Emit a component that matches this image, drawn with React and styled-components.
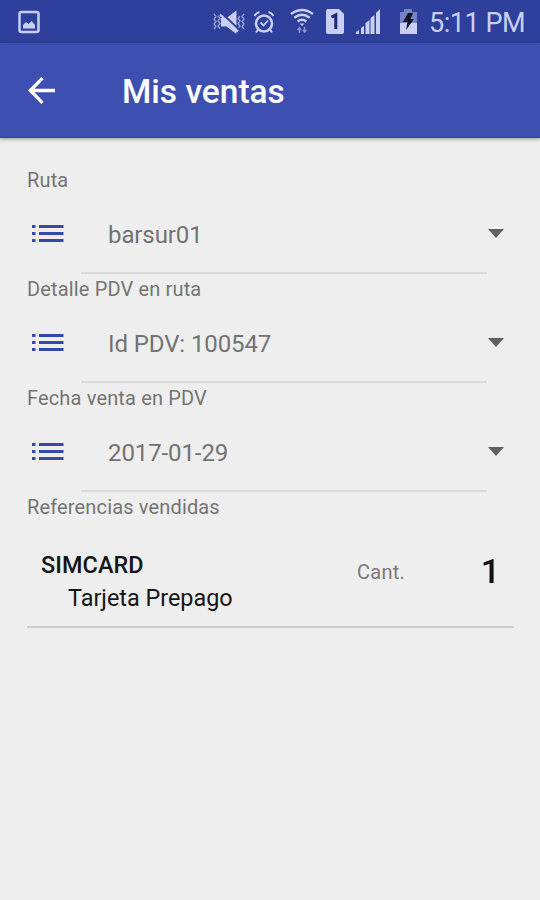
import React from 'react';
import styled, { createGlobalStyle } from 'styled-components';

const GlobalStyle = createGlobalStyle`
  body {
    margin: 0;
    background: #eeeeee;
    font-family: Roboto, "Liberation Sans", sans-serif;
  }
`;

const Screen = styled.div`
  display: flex;
  flex-direction: column;
  width: 540px;
  height: 900px;
  overflow: hidden;
  background: #eeeeee;
`;

const StatusBar = styled.div`
  display: flex;
  align-items: center;
  flex: none;
  height: 43px;
  padding: 0 15px 0 18px;
  box-sizing: border-box;
  background: #2e3f9c;
  color: #c8cff2;
`;

const StatusIcon = styled.svg`
  display: block;
  flex: none;
  width: ${props => props.$w}px;
  height: 30px;
  margin-left: ${props => props.$gap || 0}px;
`;

const Spacer = styled.div`
  flex: 1;
`;

const Clock = styled.div`
  margin-left: 12px;
  padding-top: 3px;
  width: 96px;
  font-size: 27px;
  line-height: 32px;
  letter-spacing: -0.45px;
  white-space: nowrap;
`;

const AppBar = styled.div`
  display: flex;
  align-items: center;
  flex: none;
  height: 95px;
  padding-left: 27px;
  box-sizing: border-box;
  background: #3d50b1;
  border-bottom: 1px solid #2f409c;
  box-shadow: 0 1px 4px rgba(0, 0, 0, .4);
`;

const Title = styled.h1`
  margin: 3px 0 0 67px;
  color: #fff;
  font-size: 33.5px;
  font-weight: 500;
  line-height: 40px;
`;

const Content = styled.div`
  padding: 27px 26px 0 27px;
`;

const Field = styled.div`
  display: flex;
  flex-direction: column;
  height: 109px;
`;

const Label = styled.div`
  height: 30px;
  line-height: 31px;
  font-size: 20px;
  color: #747474;
  letter-spacing: 0.15px;
`;

const Select = styled.div`
  display: flex;
  align-items: center;
  height: 77px;
  padding: 0 10px 0 5px;
`;

const Value = styled.div`
  flex: 1;
  margin-left: 44px;
  padding-top: 2px;
  font-size: 24px;
  letter-spacing: -0.1px;
  color: #727272;
`;

const Caret = styled.div`
  border: 8px solid transparent;
  border-top: 9px solid #606060;
  border-bottom: 0;
`;

const Divider = styled.div`
  height: 2px;
  margin: 0 27px 0 54px;
  background: #dadada;
`;

const Sale = styled.div`
  display: flex;
  align-items: center;
  height: 104px;
  padding: 0 17px 0 14px;
  border-bottom: 2px solid #cccccc;
`;

const Product = styled.div`
  flex: 1;
  padding-top: 16px;
  font-size: 23.4px;
  line-height: 33px;
  color: #151515;
`;

const Category = styled.div`
  font-weight: 500;
  letter-spacing: 0.1px;
`;

const Name = styled.div`
  padding-left: 27px;
`;

const Quantity = styled.div`
  width: 95px;
  margin-right: -3px;
  text-align: right;
  font-size: 34px;
  font-weight: 500;
  color: #111;
  padding-bottom: 6px;
`;

const QuantityLabel = styled.div`
  padding-bottom: 4px;
  font-size: 20px;
  letter-spacing: 0.25px;
  color: #7a7a7a;
`;

const ListIcon = () => (
  <svg width="32" height="18" viewBox="0 0 32 18" fill="#3449a9">
    {[0, 7, 14].map(y => (
      <React.Fragment key={y}>
        <rect x="0" y={y} width="3.5" height="3" />
        <rect x="7" y={y} width="24.5" height="3" />
      </React.Fragment>
    ))}
  </svg>
);

const BackIcon = () => (
  <svg width="28" height="28" viewBox="0 0 28 28" fill="none" stroke="#fff" strokeWidth="3.3">
    <path d="M28 14.5H3M15.5 2.2L3.3 14.5l12.2 12.3" />
  </svg>
);

const PictureIcon = () => (
  <StatusIcon $w={22} viewBox="0 0 22 30">
    <rect x="1.5" y="5" width="19" height="20" rx="2" fill="none" stroke="currentColor" strokeWidth="2.5" />
    <path d="M5 21.5V18l3-3 2.5 2 3-3 3.5 4v3.5z" fill="currentColor" />
  </StatusIcon>
);

const VibrateIcon = () => (
  <StatusIcon $w={34} viewBox="0 0 34 30">
    <path d="M2 7l2 2.5-2 2.5 2 2.5-2 2.5 2 2.5-2 2.5M6 9l2 2.5-2 2.5 2 2.5-2 2.5 2 2.5M32 7l-2 2.5 2 2.5-2 2.5 2 2.5-2 2.5 2 2.5M28 9l-2 2.5 2 2.5-2 2.5 2 2.5-2 2.5" fill="none" stroke="currentColor" strokeWidth="1.3" opacity=".7" />
    <path d="M9 11h5.5L24.5 3.5V27l-10-7.5H9z" fill="currentColor" />
    <path d="M9.5 6l18 17" stroke="#2e3f9c" strokeWidth="2" />
    <path d="M8 7.5l18 17" stroke="currentColor" strokeWidth="2.4" />
  </StatusIcon>
);

const AlarmIcon = () => (
  <StatusIcon $w={22} $gap={7} viewBox="0 0 22 30" fill="none" stroke="currentColor">
    <circle cx="11" cy="16.5" r="8" strokeWidth="2.6" />
    <path d="M1.5 9a8 8 0 0 1 5-4M20.5 9a8 8 0 0 0-5-4M5 22.5l-2 3M17 22.5l2 3" strokeWidth="2" />
    <path d="M7.5 15.5l3 3 4.5-5" strokeWidth="1.8" />
  </StatusIcon>
);

const WifiIcon = () => (
  <StatusIcon $w={24} $gap={15} viewBox="0 0 24 30" fill="none" stroke="currentColor">
    <path d="M1 7q11-8 22 0M4.3 10.8q7.7-6 15.4 0M7.6 14.5q4.4-3.5 8.8 0" strokeWidth="2.4" />
    <path d="M9.5 16.5h5L12 19z" fill="currentColor" stroke="none" />
    <path d="M9.5 26v-5M7.5 23l2-2 1.5 2M14.5 20v5M13 23l1.5 2 2-2" strokeWidth="1.5" opacity=".6" />
  </StatusIcon>
);

const SimIcon = () => (
  <StatusIcon $w={18} $gap={12} viewBox="0 0 18 30">
    <path d="M2 2h11l5 5v18q0 2-2 2H2q-2 0-2-2V4q0-2 2-2z" fill="currentColor" />
    <path d="M5.5 10.2L9.8 8v14" fill="none" stroke="#17277c" strokeWidth="3" />
  </StatusIcon>
);

const SignalIcon = () => (
  <StatusIcon $w={25} $gap={12} viewBox="0 0 25 30" fill="currentColor">
    <path d="M0 27v-2l3-2v4zM5 27v-6l3-2v8zM9.5 27V16l4-3v14zM14.5 27v-16l4-3v19zM20 27V6l4-4v25z" />
  </StatusIcon>
);

const BatteryIcon = () => (
  <StatusIcon $w={17} $gap={19} viewBox="0 0 17 30">
    <path d="M0 5h4V2h8v3h5v22H0z" fill="#7583c4" />
    <path d="M0 16h17v11H0z" fill="currentColor" />
    <path d="M8 6h5l-2.5 6H14L6 23l1.5-8H3z" fill="#101426" />
  </StatusIcon>
);

const fields = [
  { label: 'Ruta', value: 'barsur01' },
  { label: 'Detalle PDV en ruta', value: 'Id PDV: 100547' },
  { label: 'Fecha venta en PDV', value: '2017-01-29' },
];

const App = () => (
  <Screen>
    <GlobalStyle />
    <StatusBar>
      <PictureIcon />
      <Spacer />
      <VibrateIcon />
      <AlarmIcon />
      <WifiIcon />
      <SimIcon />
      <SignalIcon />
      <BatteryIcon />
      <Clock>5:11 PM</Clock>
    </StatusBar>
    <AppBar>
      <BackIcon />
      <Title>Mis ventas</Title>
    </AppBar>
    <Content>
      {fields.map(({ label, value }) => (
        <Field key={label}>
          <Label>{label}</Label>
          <Select>
            <ListIcon />
            <Value>{value}</Value>
            <Caret />
          </Select>
          <Divider />
        </Field>
      ))}
      <Label>Referencias vendidas</Label>
      <Sale>
        <Product>
          <Category>SIMCARD</Category>
          <Name>Tarjeta Prepago</Name>
        </Product>
        <QuantityLabel>Cant.</QuantityLabel>
        <Quantity>1</Quantity>
      </Sale>
    </Content>
  </Screen>
);

export default App;
